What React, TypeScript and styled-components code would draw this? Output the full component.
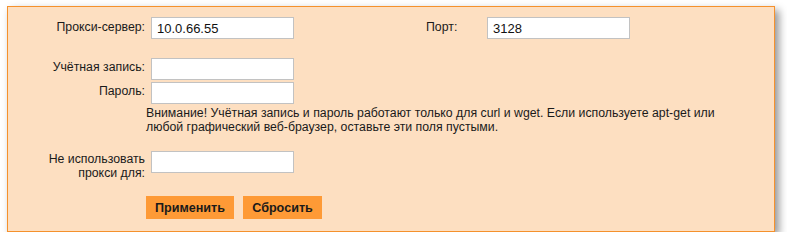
import React from "react";
import styled, { createGlobalStyle } from "styled-components";

const Global = createGlobalStyle`
  html, body { margin: 0; padding: 0; background: #ffffff; }
  body { font-family: "Liberation Sans", Arial, sans-serif; font-size: 12.3px; color: #1a1a1a; }
`;

const Panel = styled.div`
  box-sizing: border-box;
  margin: 6px 0 0 7px;
  width: 768px;
  height: 226px;
  background: #fddfc1;
  border: 1px solid #f5912c;
  box-shadow: 4px 4px 8px rgba(0, 0, 0, 0.42);
  padding-top: 10px;
`;

const Row = styled.div<{ $top?: number }>`
  display: grid;
  grid-template-columns: 137px 1fr;
  column-gap: 1px;
  margin-top: ${(p) => p.$top ?? 0}px;
`;

const Label = styled.label<{ $pad?: number }>`
  text-align: right;
  line-height: 14px;
  padding-top: ${(p) => p.$pad ?? 2}px;
`;

const Cell = styled.div`
  display: flex;
  align-items: flex-start;
  padding-left: 5px;
`;

const Input = styled.input`
  box-sizing: border-box;
  width: 143px;
  height: 22px;
  margin: 0;
  padding: 0 5px;
  border: 1px solid #c2c2c2;
  background: #ffffff;
  font-family: "Liberation Sans", Arial, sans-serif;
  font-size: 13px;
  color: #111111;
  outline: none;
`;

const PortLabel = styled.label`
  margin-left: 132px;
  width: 61px;
  padding-top: 3px;
  line-height: 14px;
`;

const Note = styled.p`
  margin: 0;
  max-width: 580px;
  line-height: 14px;
  color: #1a1a1a;
`;

const Buttons = styled.div`
  display: flex;
  gap: 9px;
`;

const Button = styled.button<{ $w: number }>`
  box-sizing: border-box;
  width: ${(p) => p.$w}px;
  height: 23px;
  margin: 0;
  padding: 0;
  border: none;
  background: #fe9a36;
  font-family: "Liberation Sans", Arial, sans-serif;
  font-size: 12.6px;
  font-weight: bold;
  color: #1a1a1a;
  cursor: pointer;
`;

export default function App() {
  return (
    <>
      <Global />
      <Panel>
        <Row>
          <Label $pad={3}>Прокси-сервер:</Label>
          <Cell>
            <Input defaultValue="10.0.66.55" />
            <PortLabel>Порт:</PortLabel>
            <Input defaultValue="3128" />
          </Cell>
        </Row>
        <Row $top={19}>
          <Label>Учётная запись:</Label>
          <Cell>
            <Input />
          </Cell>
        </Row>
        <Row $top={2}>
          <Label>Пароль:</Label>
          <Cell>
            <Input type="password" />
          </Cell>
        </Row>
        <Row $top={2}>
          <span />
          <Note>
            Внимание! Учётная запись и пароль работают только для curl и wget. Если используете apt-get или любой графический веб-браузер, оставьте эти поля пустыми.
          </Note>
        </Row>
        <Row $top={17}>
          <Label $pad={1}>
            Не использовать
            <br />
            прокси для:
          </Label>
          <Cell>
            <Input />
          </Cell>
        </Row>
        <Row $top={16}>
          <span />
          <Buttons>
            <Button $w={88}>Применить</Button>
            <Button $w={79}>Сбросить</Button>
          </Buttons>
        </Row>
      </Panel>
    </>
  );
}
